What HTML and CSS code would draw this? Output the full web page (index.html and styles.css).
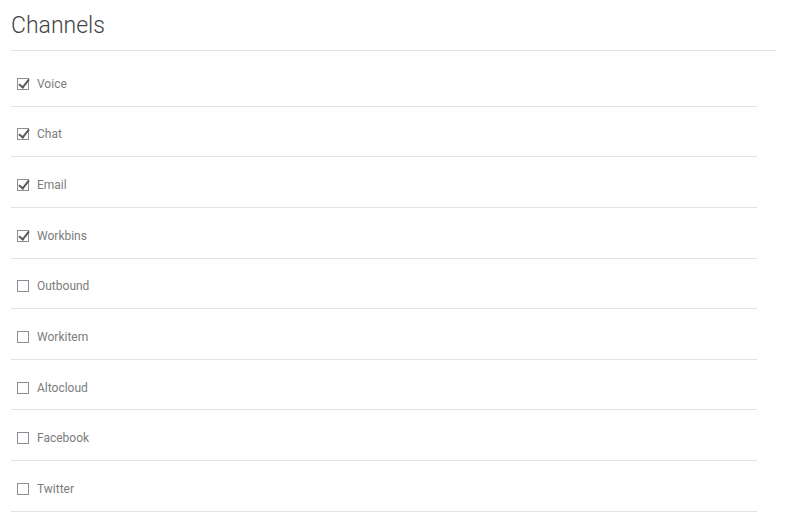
FILE: index.html
```html
<!DOCTYPE html>
<html lang="en">
<head>
<meta charset="UTF-8">
<meta name="viewport" content="width=device-width, initial-scale=1.0">
<title>Channels</title>
<link rel="stylesheet" href="styles.css">
</head>
<body>
<div class="panel">
    <h1 class="panel-title">Channels</h1>
    <ul class="channel-list">
        <li class="channel"><span class="box checked"></span>Voice</li>
        <li class="channel"><span class="box checked"></span>Chat</li>
        <li class="channel"><span class="box checked"></span>Email</li>
        <li class="channel"><span class="box checked"></span>Workbins</li>
        <li class="channel"><span class="box"></span>Outbound</li>
        <li class="channel"><span class="box"></span>Workitem</li>
        <li class="channel"><span class="box"></span>Altocloud</li>
        <li class="channel"><span class="box"></span>Facebook</li>
        <li class="channel"><span class="box"></span>Twitter</li>
    </ul>
</div>
</body>
</html>
```

FILE: styles.css
```css
body {
    margin: 0;
    background: #fff;
    font-family: Roboto, "Liberation Sans", Arial, sans-serif;
}

.panel {
    margin-left: 11px;
    width: 765px;
}

.panel-title {
    margin: 0;
    padding-top: 12px;
    height: 38px;
    font-size: 23px;
    font-weight: 300;
    color: #444;
    border-bottom: 1px solid #e3e3e3;
}

.channel-list {
    list-style: none;
    margin: 0;
    padding: 5px 0 0;
    width: 746px;
}

.channel {
    box-sizing: border-box;
    display: flex;
    align-items: center;
    height: 50.65px;
    padding: 6px 0 0 6px;
    border-bottom: 1px solid #e3e3e3;
    font-size: 12px;
    color: #7c7c7c;
}

.box {
    width: 10px;
    height: 10px;
    border: 1px solid #8a8f96;
    margin-right: 8px;
    position: relative;
}

.box.checked::after {
    content: "";
    position: absolute;
    left: 3px;
    top: -2px;
    width: 4px;
    height: 9px;
    border-right: 2px solid #5a5a5a;
    border-bottom: 2px solid #5a5a5a;
    transform: rotate(38deg);
}
```
